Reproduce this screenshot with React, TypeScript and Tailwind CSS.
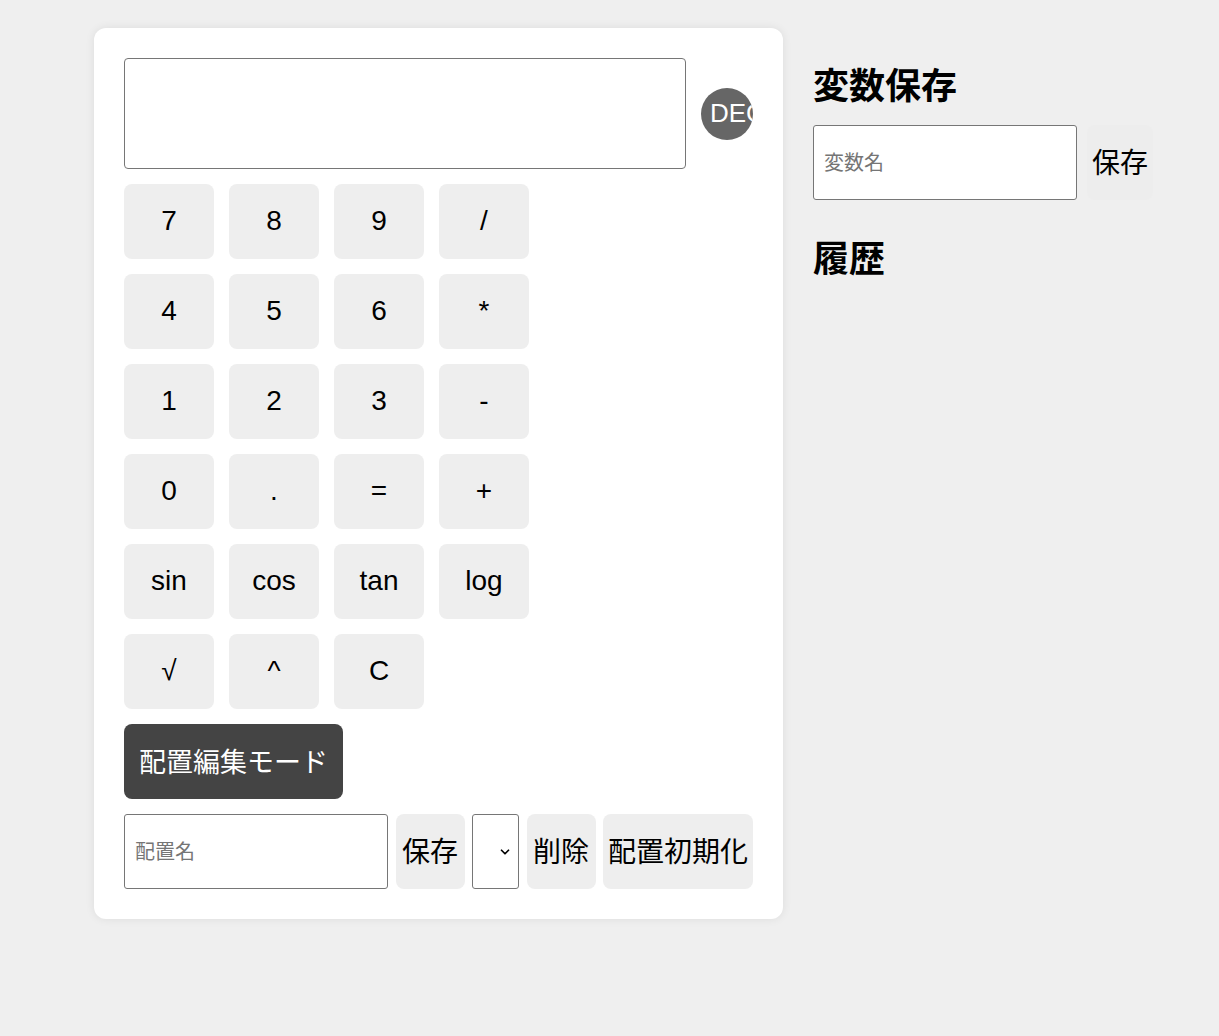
import { ChevronDown } from 'lucide-react';

const keys = [
  ['7', '8', '9', '/'],
  ['4', '5', '6', '*'],
  ['1', '2', '3', '-'],
  ['0', '.', '=', '+'],
  ['sin', 'cos', 'tan', 'log'],
  ['√', '^', 'C'],
];

const font = { fontFamily: '"Liberation Sans", "Noto Sans CJK JP", sans-serif' };

export default function App() {
  return (
    <div className="min-h-screen bg-[#efefef] pl-[94px] pt-[28px] text-black" style={font}>
      <div className="flex items-start gap-[30px]">
        {/* Calculator card */}
        <div className="w-[689px] shrink-0 rounded-xl bg-white p-[30px] shadow-[0_0_10px_rgba(0,0,0,0.08)]">
          <div className="flex items-center gap-[15px]">
            <div className="h-[111px] flex-1 rounded border border-[#767676] bg-white" />
            <div className="flex h-[52px] w-[52px] shrink-0 items-center overflow-hidden whitespace-nowrap rounded-full bg-[#666666] pb-[2px] pl-[9px] text-[26px] leading-none text-white">
              DEG
            </div>
          </div>

          <div className="mt-[15px] grid w-[405px] grid-cols-4 gap-[15px]">
            {keys.flat().map((k) => (
              <button
                key={k}
                className="flex h-[75px] w-[90px] items-center justify-center rounded-lg bg-[#eeeeee] pb-[2px] text-[28px] leading-none"
              >
                {k}
              </button>
            ))}
          </div>

          <button className="mt-[15px] flex h-[75px] items-center rounded-lg bg-[#444444] px-[15px] pt-[3px] text-[27px] leading-none text-white">
            配置編集モード
          </button>

          <div className="mt-[15px] flex h-[75px] items-stretch justify-between">
            <input
              placeholder="配置名"
              className="w-[264px] rounded-[3px] border border-[#767676] bg-white px-[10px] text-[20px] placeholder:text-[#757575]"
            />
            <button className="w-[69px] whitespace-nowrap rounded-lg bg-[#eeeeee] pt-[3px] text-[28px] leading-none">保存</button>
            <div className="relative w-[47px]">
              <select className="h-full w-full appearance-none rounded-[3px] border border-[#767676] bg-white" />
              <ChevronDown
                size={14}
                strokeWidth={3}
                className="pointer-events-none absolute right-[7px] top-1/2 -translate-y-1/2"
              />
            </div>
            <button className="w-[69px] whitespace-nowrap rounded-lg bg-[#eeeeee] pt-[3px] text-[28px] leading-none">削除</button>
            <button className="w-[150px] whitespace-nowrap rounded-lg bg-[#eeeeee] pt-[3px] text-[28px] leading-none">配置初期化</button>
          </div>
        </div>

        {/* Right panel */}
        <div className="w-[360px]">
          <h2 className="mt-[37px] text-[36px] font-bold leading-[43px]">変数保存</h2>
          <div className="mt-[17px] flex h-[75px] gap-[10px]">
            <input
              placeholder="変数名"
              className="w-[264px] rounded-[3px] border border-[#767676] bg-white px-[10px] text-[20px] placeholder:text-[#757575]"
            />
            <button className="w-[66px] shrink-0 whitespace-nowrap rounded-lg bg-[#ededed] pt-[3px] text-[28px] leading-none">保存</button>
          </div>
          <h2 className="mt-[38px] text-[36px] font-bold leading-[43px]">履歴</h2>
        </div>
      </div>
    </div>
  );
}
